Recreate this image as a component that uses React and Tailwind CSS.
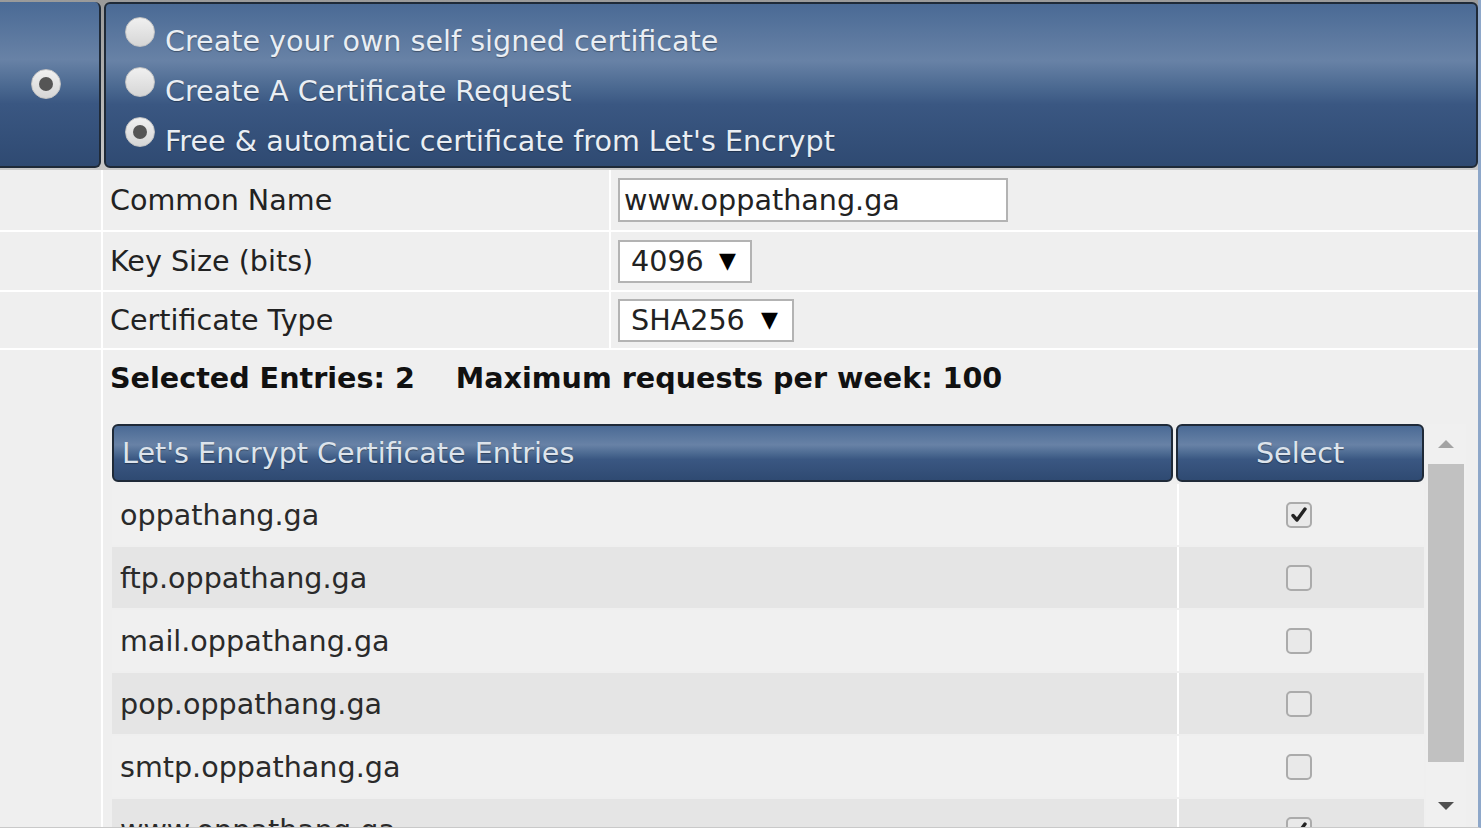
import React from 'react';

// Certificate wizard: method picker on top, form fields, then the Let's Encrypt entry list
const entries = [
  { name: 'oppathang.ga', checked: true },
  { name: 'ftp.oppathang.ga', checked: false },
  { name: 'mail.oppathang.ga', checked: false },
  { name: 'pop.oppathang.ga', checked: false },
  { name: 'smtp.oppathang.ga', checked: false },
  { name: 'www.oppathang.ga', checked: true },
];

const Radio = ({ on }) => (
  <span className="flex h-[30px] w-[30px] shrink-0 items-center justify-center rounded-full border border-[#c4c4c4] bg-[linear-gradient(to_bottom,#f0f0f0,#d6d6d6)]">
    {on && <span className="h-[14px] w-[14px] rounded-full bg-[#555]" />}
  </span>
);

const Checkbox = ({ on }) => (
  <span className="flex h-[26px] w-[26px] items-center justify-center rounded-[5px] border-2 border-[#ababab] bg-[#e9e9e9]">
    {on && (
      <svg width="18" height="18" viewBox="0 0 18 18">
        <path d="M3 9.5l4 4.5 8-11" fill="none" stroke="#222" strokeWidth="3.4" strokeLinecap="round" strokeLinejoin="round" />
      </svg>
    )}
  </span>
);

const barBg =
  'bg-[linear-gradient(to_bottom,#4a6a95_0%,#6882a6_35%,#4a6890_52%,#3a5782_62%,#2f4a72_100%)]';

const FakeSelect = ({ value, w }) => (
  <div className={`flex h-[43px] items-center justify-between border-2 border-[#b3b3b3] bg-white pl-[11px] pr-[14px] ${w}`}>
    <span>{value}</span>
    <span className="text-[22px] text-black">▼</span>
  </div>
);

export default function App() {
  return (
    <div className="h-[836px] w-[1484px] overflow-hidden bg-white font-['DejaVu_Sans','Verdana',sans-serif] text-[28.6px] leading-[34px] text-[#222]">
      <div className="flex h-[828px] w-[1481px] flex-col overflow-hidden border-r-[3px] border-b border-[#8ea7c9] border-b-[#c9c9c9] bg-white">
        {/* certificate method picker */}
        <div className="flex h-[170px] shrink-0 gap-[3px] bg-[linear-gradient(to_bottom,#9a9a9a,#c8c8c8)] pt-[2px] pb-[2px]">
          <div className={`flex w-[101px] items-center justify-center rounded-r-[6px] border-r-2 border-b-2 border-[#1f2a38] pr-[8px] ${barBg}`}>
            <Radio on />
          </div>
          <div className={`flex flex-1 flex-col rounded-[6px] border-2 border-[#1f2a38] pt-[11px] pl-[19px] text-[#e9eef4] [text-shadow:0_1px_1px_rgba(0,0,0,0.35)] ${barBg}`}>
            {['Create your own self signed certificate', 'Create A Certificate Request', "Free & automatic certificate from Let's Encrypt"].map((t, i) => (
              <div key={t} className="flex h-[50px] items-start gap-[10px]">
                <span className="mt-[2px]"><Radio on={i === 2} /></span>
                <span className="mt-[1px] leading-[50px]">{t}</span>
              </div>
            ))}
          </div>
        </div>

        {/* form rows */}
        <div className="grid flex-1 grid-cols-[101px_506px_1fr] grid-rows-[60px_58px_56px_1fr] gap-[2px] bg-white">
          <div className="bg-[#efefef]" />
          <div className="flex items-center bg-[#efefef] pl-[7px]">Common Name</div>
          <div className="flex items-center bg-[#efefef] pl-[7px]">
            <div className="flex h-[44px] w-[390px] items-center border-2 border-[#b3b3b3] bg-white pl-[4px]">www.oppathang.ga</div>
          </div>

          <div className="bg-[#efefef]" />
          <div className="flex items-center bg-[#efefef] pl-[7px]">Key Size (bits)</div>
          <div className="flex items-center bg-[#efefef] pl-[7px]">
            <FakeSelect value="4096" w="w-[134px]" />
          </div>

          <div className="bg-[#efefef]" />
          <div className="flex items-center bg-[#efefef] pl-[7px]">Certificate Type</div>
          <div className="flex items-center bg-[#efefef] pl-[7px]">
            <FakeSelect value="SHA256" w="w-[176px]" />
          </div>

          <div className="bg-[#efefef]" />
          <div className="col-span-2 flex flex-col bg-[#efefef] pl-[7px] pt-[11px]">
            <div className="flex gap-[41px] font-bold text-[#111]">
              <span>Selected Entries: 2</span>
              <span>Maximum requests per week: 100</span>
            </div>

            {/* entry list with its scrollbar */}
            <div className="mt-[29px] flex flex-1 overflow-hidden pl-[2px]">
              <div className="flex w-[1312px] flex-col gap-[2px]">
                <div className="grid h-[58px] shrink-0 grid-cols-[1fr_248px] gap-[3px] text-[#dde4ec] [text-shadow:0_1px_1px_rgba(0,0,0,0.35)]">
                  <div className={`flex items-center rounded-[6px] border-2 border-[#1f2a38] pl-[8px] ${barBg}`}>Let's Encrypt Certificate Entries</div>
                  <div className={`flex items-center justify-center rounded-[6px] border-2 border-[#1f2a38] ${barBg}`}>Select</div>
                </div>
                {entries.map((e, i) => (
                  <div key={e.name} className={`grid h-[61px] shrink-0 grid-cols-[1fr_247px] gap-[2px] ${i % 2 ? 'bg-[#e5e5e5]' : 'bg-[#f0f0f0]'}`}>
                    <div className="flex items-center pl-[8px] text-[#2a2a2a]">{e.name}</div>
                    <div className="flex items-center justify-center border-l-2 border-white pr-[6px]">
                      <Checkbox on={e.checked} />
                    </div>
                  </div>
                ))}
              </div>
              <div className="ml-[2px] flex w-[40px] flex-col items-center bg-[#f0f0f0]">
                <div className="flex h-[40px] w-full items-center justify-center">
                  <span className="h-0 w-0 border-x-[8px] border-b-[8px] border-x-transparent border-b-[#a3a3a3]" />
                </div>
                <div className="h-[298px] w-[36px] bg-[#c1c1c1]" />
                <div className="flex h-[88px] w-full items-center justify-center">
                  <span className="h-0 w-0 border-x-[8px] border-t-[8px] border-x-transparent border-t-[#505050]" />
                </div>
              </div>
            </div>
          </div>
        </div>
      </div>
    </div>
  );
}
